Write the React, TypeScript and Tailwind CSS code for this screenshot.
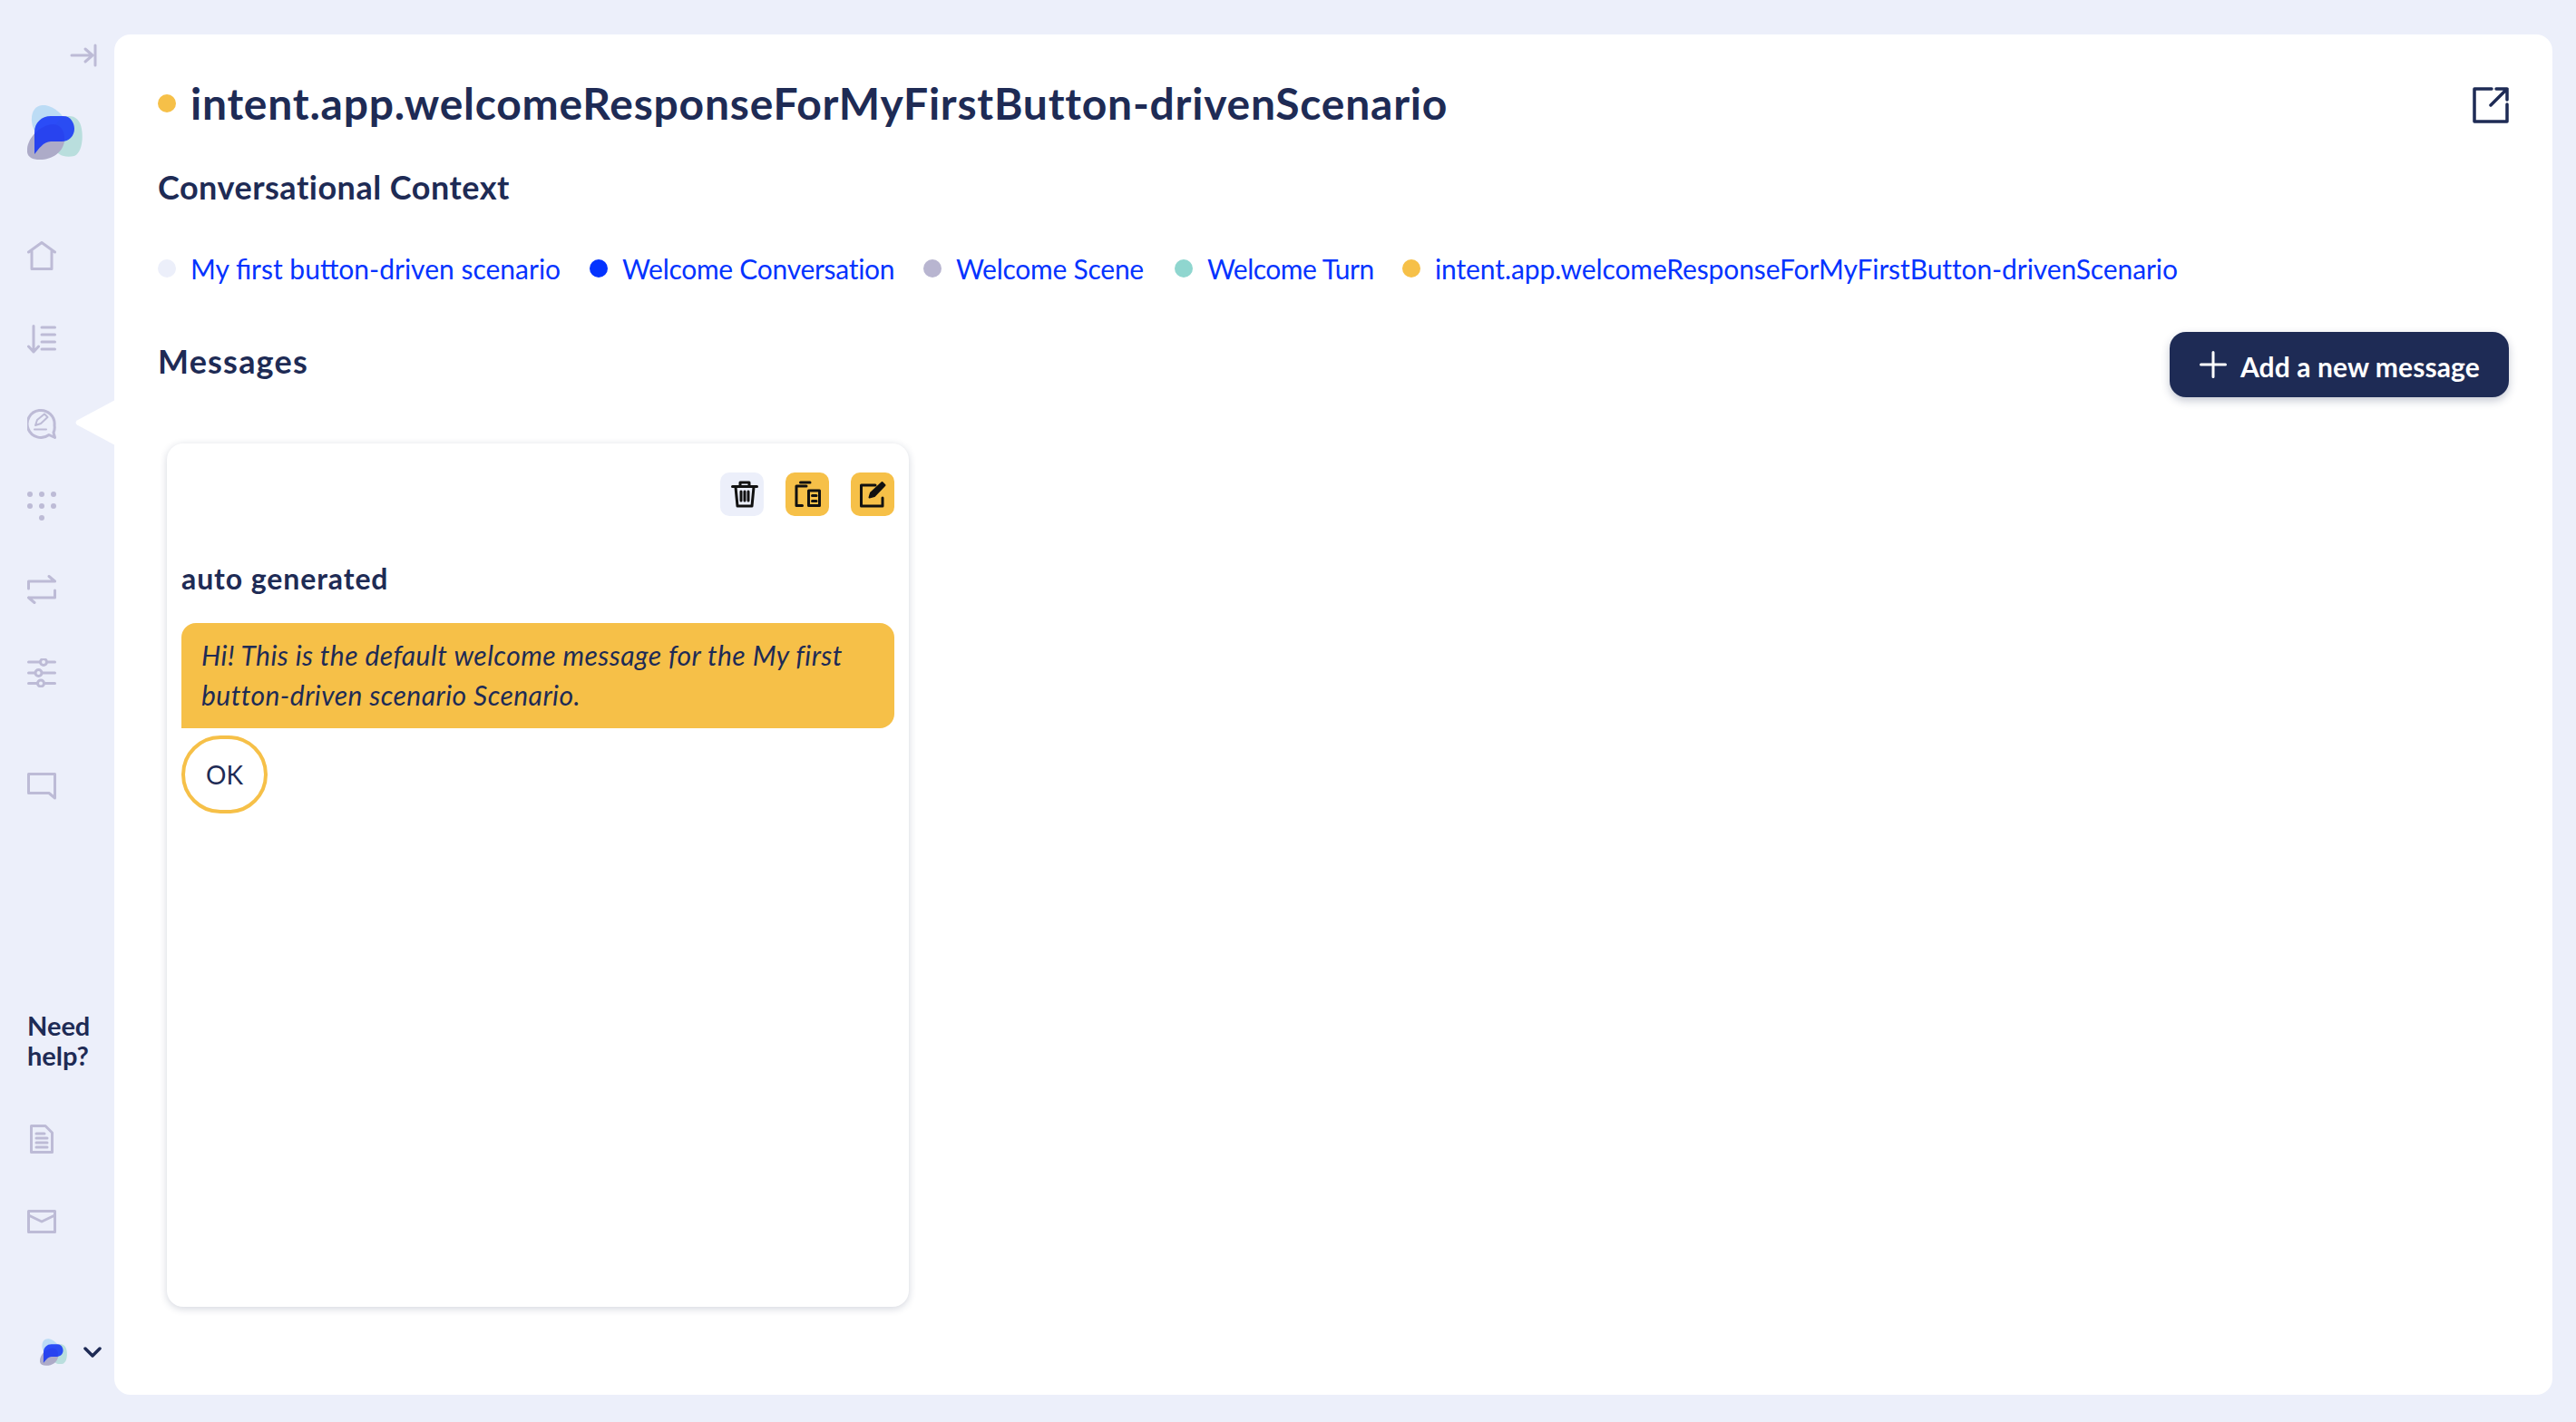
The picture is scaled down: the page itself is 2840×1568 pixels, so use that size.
import React from "react";

const S = ({ w, h, vb, cls, children }: { w: number; h: number; vb?: string; cls?: string; children: React.ReactNode }) => (
  <svg width={w} height={h} viewBox={vb ?? `0 0 ${w} ${h}`} fill="none" stroke="#bdbbd6" strokeWidth={3} strokeLinecap="round" strokeLinejoin="round" className={"block shrink-0 " + (cls ?? "")}>
    {children}
  </svg>
);

const Logo = ({ w, h }: { w: number; h: number }) => (
  <svg width={w} height={h} viewBox="0 0 61 60" className="block shrink-0">
    <path d="M5 18C4 6 10 -1 20 0C30 2 40 10 43 20C45 30 36 36 26 36C14 36 6 30 5 18Z" fill="#bcdcf5" />
    <path d="M40 13C50 10 58 14 60 26C62 38 60 52 52 56C42 58 32 56 28 44C26 30 30 18 40 13Z" fill="#b9dedd" />
    <path d="M0 48C1 36 14 22 28 21C38 21 42 30 41 40C39 52 28 60 14 60C4 60 -1 56 0 48Z" fill="#adabc8" />
    <path d="M8 54V30C8 19 16 12 26 12H40C48 12 52 20 52 26C52 34 46 40 38 40H26C18 40 12 49 8 54Z" fill="#0b2cf8" fillOpacity="0.82" />
  </svg>
);

const Dot = ({ c }: { c: string }) => <span className="block w-5 h-5 rounded-full shrink-0" style={{ backgroundColor: c }} />;

const crumbs: { c: string; t: string; w: string; s: string }[] = [
  { c: "#eceffa", t: "My first button-driven scenario", w: "w-[476px]", s: "tracking-[0px]" },
  { c: "#0433ff", t: "Welcome Conversation", w: "w-[368px]", s: "tracking-[-0.28px]" },
  { c: "#b8b5d0", t: "Welcome Scene", w: "w-[277px]", s: "tracking-[-0.25px]" },
  { c: "#8fd6cf", t: "Welcome Turn", w: "w-[251px]", s: "tracking-[-0.5px]" },
  { c: "#f6c048", t: "intent.app.welcomeResponseForMyFirstButton-drivenScenario", w: "w-[860px]", s: "tracking-[-0.1px]" },
];

export default function App() {
  return (
    <div className="flex w-[2840px] h-[1568px] bg-[#eceffa] overflow-hidden text-[#1e2b55] font-['Lato','Liberation_Sans',sans-serif]">
      <aside className="relative flex flex-col w-[126px] shrink-0">
        <div className="mt-[48px] ml-[77px]">
          <S w={30} h={26}>
            <path d="M2 13H25M17 6L25 13L17 20M28 2V24" />
          </S>
        </div>
        <div className="mt-[42px] ml-[30px]"><Logo w={61} h={60} /></div>
        <div className="mt-[90px] ml-[30px]">
          <S w={32} h={32}>
            <path d="M1.5 12L16 1.5L30.5 12M5 10V30.5H27V10" />
          </S>
        </div>
        <div className="mt-[60px] ml-[30px]">
          <S w={32} h={32}>
            <path d="M7 1.5V30M1.5 24L7 30L12.5 24M16 3H30.5M16 11H30.5M16 19H30.5M16 27H30.5" />
          </S>
        </div>
        <div className="mt-[60px] ml-[30px]">
          <S w={32} h={34}>
            <path d="M24 29.5A15 15 0 1 1 30 19C30.5 22 30 25 29 27L30.5 32.5L24 29.5Z" />
            <path d="M9 19L11 13L19 6.5L22.5 10L15 17L9 19ZM8 23.5H21" strokeWidth={2} />
          </S>
        </div>
        <div className="mt-[58px] ml-[30px]">
          <svg width="32" height="32" viewBox="0 0 32 32" fill="#bdbbd6" className="block">
            <circle cx="3" cy="3" r="3" /><circle cx="16" cy="3" r="3" /><circle cx="29" cy="3" r="3" />
            <circle cx="3" cy="16" r="3" /><circle cx="16" cy="16" r="3" /><circle cx="29" cy="16" r="3" />
            <circle cx="16" cy="29" r="3" />
          </svg>
        </div>
        <div className="mt-[60px] ml-[30px]">
          <S w={32} h={32}>
            <path d="M1.5 15V7H30.5M24 1.5L30.5 7M1.5 25H30.5V17M1.5 25L8 30.5" />
          </S>
        </div>
        <div className="mt-[60px] ml-[30px]">
          <S w={32} h={32}>
            <path d="M1.5 4H14M23 4H30.5M1.5 16H8M17 16H30.5M1.5 27.5H11M20 27.5H30.5" />
            <circle cx="18" cy="4" r="3.5" /><circle cx="12.5" cy="16" r="3.5" /><circle cx="15" cy="27.5" r="3.5" />
          </S>
        </div>
        <div className="mt-[94px] ml-[30px]">
          <S w={32} h={30}>
            <path d="M1.5 1.5H30.5V22.5V28L24 22.5H1.5V1.5Z" />
          </S>
        </div>
        <div className="mt-[232px] ml-[30px] text-[29px] leading-[33px] font-bold">
          Need<br />help?
        </div>
        <div className="mt-[60px] ml-[33px]">
          <S w={26} h={32}>
            <path d="M1.5 1.5H17L24.5 9V30.5H1.5V1.5Z" />
            <path d="M7 10H16M7 15H19M7 20H19M7 25H19" />
          </S>
        </div>
        <div className="mt-[62px] ml-[30px]">
          <S w={32} h={26}>
            <path d="M1.5 1.5H30.5V24.5H1.5V1.5ZM1.5 6L16 13L30.5 6" />
          </S>
        </div>
        <div className="mt-[116px] ml-[44px] flex items-center">
          <Logo w={30} h={30} />
          <svg width="20" height="12" viewBox="0 0 20 12" fill="none" stroke="#1e2b55" strokeWidth={3.5} strokeLinecap="round" strokeLinejoin="round" className="block ml-[18px]">
            <path d="M2 2L10 10L18 2" />
          </svg>
        </div>
        <svg width="44" height="50" viewBox="0 0 44 50" className="absolute left-[83px] top-[441px]" fill="#ffffff">
          <path d="M44 0V50L2 27.5C0 26 0 24 2 22.5Z" />
        </svg>
      </aside>

      <main className="flex-1 mt-[38px] mb-[30px] mr-[26px] rounded-[18px] bg-white pl-[48px] pr-[48px] flex flex-col">
        <div className="flex items-center h-[80px] mt-[36px] -mb-[2px]">
          <Dot c="#f6c048" />
          <h1 className="ml-[16px] text-[48px] leading-[60px] font-bold tracking-[0.76px] whitespace-nowrap">intent.app.welcomeResponseForMyFirstButton-drivenScenario</h1>
          <svg width="40" height="40" viewBox="0 0 40 40" fill="none" stroke="#1e2b55" strokeWidth={3.5} strokeLinecap="round" strokeLinejoin="round" className="block ml-auto translate-y-[2px]">
            <path d="M21 2H2V38H38V19M20 20L38 2M26 2H38V14" />
          </svg>
        </div>
        <h2 className="mt-[32px] text-[36px] leading-[44px] font-bold tracking-[0.5px] whitespace-nowrap">Conversational Context</h2>
        <div className="mt-[48px] flex items-center h-[40px]">
          {crumbs.map((x) => (
            <div key={x.t} className={"flex items-center shrink-0 " + x.w}>
              <Dot c={x.c} />
              <span className={"ml-[16px] text-[30px] leading-[40px] text-[#0433ff] whitespace-nowrap " + x.s}>{x.t}</span>
            </div>
          ))}
        </div>
        <div className="mt-[50px] flex items-start justify-between h-[72px]">
          <h2 className="mt-[10px] text-[36px] leading-[44px] font-bold tracking-[1.2px]">Messages</h2>
          <button className="flex items-center w-[374px] h-[72px] rounded-[18px] bg-[#1e2b55] text-white shadow-[0_4px_10px_rgba(30,43,85,0.25)] pl-[33px]">
            <svg width="30" height="30" viewBox="0 0 30 30" fill="none" stroke="#fff" strokeWidth={3} strokeLinecap="round" className="block">
              <path d="M15 1.5V28.5M1.5 15H28.5" />
            </svg>
            <span className="ml-[15px] pt-[3px] text-[30px] leading-[40px] font-bold tracking-[0.1px] whitespace-nowrap">Add a new message</span>
          </button>
        </div>
        <section className="mt-[51px] ml-[10px] w-[818px] h-[952px] rounded-[18px] bg-white shadow-[0_2px_8px_rgba(30,43,85,0.2)] px-[16px] flex flex-col">
          <div className="flex justify-end gap-[24px] mt-[32px]">
            <span className="flex items-center justify-center w-[48px] h-[48px] rounded-[10px] bg-[#eceffa]">
              <svg width="30" height="30" viewBox="0 0 30 30" fill="none" stroke="#111" strokeWidth={3} strokeLinecap="round" strokeLinejoin="round" className="block translate-x-[3px]">
                <path d="M1.5 6.5H28.5M10 6V2H20V6M5 7L7 28H23L25 7M11 12V22M15 12V22M19 12V22" />
              </svg>
            </span>
            <span className="flex items-center justify-center w-[48px] h-[48px] rounded-[10px] bg-[#f6c048]">
              <svg width="30" height="30" viewBox="0 0 30 30" fill="none" stroke="#111" strokeWidth={3} strokeLinecap="round" strokeLinejoin="round" className="block">
                <path d="M7.5 2H18M14 6H3V27.5H9.5M16.5 11H28.5V27.5H16.5ZM20.5 16.5H25M20.5 22.5H25" />
              </svg>
            </span>
            <span className="flex items-center justify-center w-[48px] h-[48px] rounded-[10px] bg-[#f6c048]">
              <svg width="30" height="30" viewBox="0 0 30 30" fill="none" stroke="#111" strokeWidth={3} strokeLinecap="round" strokeLinejoin="round" className="block">
                <path d="M18 5H2.5V28H26V19" />
                <path d="M11.5 18.5L13 13.5L25.5 2L28.5 5L17 17Z" fill="#111" strokeWidth={2} />
              </svg>
            </span>
          </div>
          <div className="mt-[47px] text-[32px] leading-[44px] font-bold tracking-[0.9px] whitespace-nowrap">auto generated</div>
          <div className="mt-[27px] w-[786px] h-[116px] rounded-[16px] rounded-bl-none bg-[#f6c048] pl-[22px] pr-[16px] pt-[13px] text-[30px] leading-[44px] italic tracking-[0.45px]">
            Hi! This is the default welcome message for the My first button-driven scenario Scenario.
          </div>
          <div className="mt-[8px] flex items-center justify-center w-[95px] h-[86px] rounded-[48px] border-[4px] border-[#f6c048] text-[28px]">OK</div>
        </section>
      </main>
    </div>
  );
}
